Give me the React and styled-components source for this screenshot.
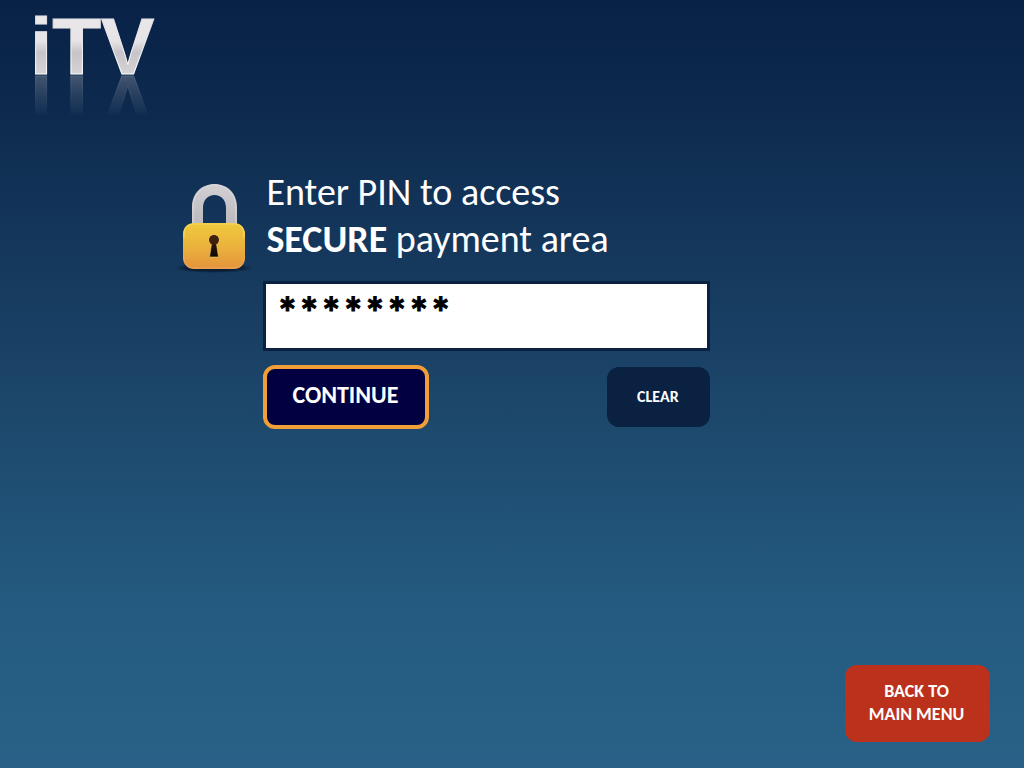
import React, { useState } from 'react';
import styled, { createGlobalStyle } from 'styled-components';

const GlobalStyle = createGlobalStyle`
  * {
    box-sizing: border-box;
  }
  body {
    margin: 0;
    font-family: Carlito, Lato, 'Open Sans', sans-serif;
    color: #fff;
  }
`

const Page = styled.div`
  display: flex;
  flex-direction: column;
  min-height: 100vh;
  padding: 16px 34px 26px;
  background: linear-gradient(#092147 0%, #0d2a4e 14%, #1c466a 52%, #245a7f 78%, #286187 100%);
`

const Logo = styled.svg`
  display: block;
  width: 124px;
  height: 59px;
  overflow: visible;
  -webkit-box-reflect: below 0 linear-gradient(transparent 30%, rgba(0, 0, 0, 0.28));
`

const PinForm = styled.form`
  display: grid;
  grid-template-columns: 76px minmax(0, 447px);
  column-gap: 10px;
  margin-top: 94px;
  margin-left: 15%;
`

const Lock = styled.svg`
  width: 76px;
  height: 98px;
  margin-top: 7px;
`

const Title = styled.label`
  display: block;
  padding-left: 3px;
  font-size: 38px;
  line-height: 47px;
`

const PinInput = styled.input`
  display: block;
  width: 100%;
  height: 70px;
  margin-top: 18px;
  padding: 0 10px 6px;
  border: 3px solid #0a2142;
  border-radius: 0;
  outline: none;
  background: #fff;
  color: #000;
  font-family: inherit;
  font-size: 44px;
  font-weight: bold;
  -webkit-text-stroke: 1px #000;
`

const Actions = styled.div`
  display: flex;
  align-items: center;
  justify-content: space-between;
  margin-top: 14px;
`

const Button = styled.button`
  padding: 0 2px 2px 0;
  border: none;
  border-radius: 12px;
  color: #fff;
  font-family: inherit;
  font-weight: bold;
  cursor: pointer;
`

const ContinueButton = styled(Button)`
  width: 166px;
  height: 64px;
  padding-bottom: 6px;
  border: 4px solid #f19d38;
  background: #010142;
  font-size: 24px;
`

const ClearButton = styled(Button)`
  width: 103px;
  height: 60px;
  background: #0a2142;
  font-size: 16px;
`

const MenuButton = styled(Button)`
  align-self: flex-end;
  width: 145px;
  height: 77px;
  margin-top: auto;
  background: #bb311c;
  font-size: 18px;
  line-height: 23px;
`

function LogoMark() {
  return (
    <Logo viewBox="0 0 124 59" role="img" aria-label="iTV">
      <defs>
        <linearGradient id="metal" x1="0" y1="0" x2="0" y2="59" gradientUnits="userSpaceOnUse">
          <stop offset="0" stopColor="#e9e7ea" />
          <stop offset="0.42" stopColor="#e6e4e6" />
          <stop offset="0.62" stopColor="#c6c4c8" />
          <stop offset="1" stopColor="#d6d4d6" />
        </linearGradient>
        <linearGradient id="rim" x1="0" y1="0" x2="0" y2="59" gradientUnits="userSpaceOnUse">
          <stop offset="0" stopColor="#dddbe0" />
          <stop offset="1" stopColor="#ffffff" />
        </linearGradient>
      </defs>
      <text
        x="-4"
        y="58"
        fontFamily="Liberation Sans, Arial, sans-serif"
        fontWeight="bold"
        fontSize="80"
        fill="url(#metal)"
        stroke="url(#rim)"
        strokeWidth="1"
      >
        iTV
      </text>
    </Logo>
  )
}

function LockIcon() {
  return (
    <Lock viewBox="1 0 76 98" aria-hidden="true">
      <defs>
        <linearGradient id="shackle" x1="0" y1="0" x2="0" y2="1">
          <stop offset="0" stopColor="#d2d0d3" />
          <stop offset="1" stopColor="#b9b7bb" />
        </linearGradient>
        <linearGradient id="body" x1="0" y1="0" x2="0" y2="1">
          <stop offset="0" stopColor="#f0c93c" />
          <stop offset="0.5" stopColor="#ebb33d" />
          <stop offset="1" stopColor="#e3933c" />
        </linearGradient>
        <linearGradient id="keyhole" x1="0" y1="0" x2="0" y2="1">
          <stop offset="0" stopColor="#40200f" />
          <stop offset="1" stopColor="#0d0805" />
        </linearGradient>
        <radialGradient id="shade">
          <stop offset="0" stopColor="#051327" stopOpacity="0.9" />
          <stop offset="0.7" stopColor="#051327" stopOpacity="0.6" />
          <stop offset="1" stopColor="#051327" stopOpacity="0" />
        </radialGradient>
      </defs>
      <ellipse cx="38" cy="92" rx="40" ry="5" fill="url(#shade)" />
      <path
        d="M16 52V31C16 17 26 8 38.500 8S61 17 61 31V52H50V32C50 24 45 19 38.500 19S27 24 27 32V52Z"
        fill="url(#shackle)"
      />
      <path d="M17 50V31C17 18 27 9 38.500 9S60 18 60 31V50" fill="none" stroke="#dcdadd" strokeWidth="1" />
      <rect x="7" y="47" width="62" height="46" rx="11" fill="url(#body)" />
      <path d="M8 62V58Q8 48 18 48H58Q68 48 68 58V62" fill="none" stroke="#f5d75c" strokeWidth="1.2" />
      <path d="M8 80V82Q8 92 18 92H58Q68 92 68 82V80" fill="none" stroke="#efa75a" strokeWidth="1" />
      <path
        d="M35.500 68A5 5 0 1 1 40.500 68L42.500 81H33.500Z"
        fill="url(#keyhole)"
        stroke="#f4cd63"
        strokeWidth="0.6"
      />
      <circle cx="38" cy="64" r="4.800" fill="#40200f" />
    </Lock>
  )
}

function App() {
  const [pin, setPin] = useState('********');

  return (
    <Page>
      <GlobalStyle />
      <header>
        <LogoMark />
      </header>
      <PinForm onSubmit={(e) => e.preventDefault()}>
        <LockIcon />
        <div>
          <Title htmlFor="pin">
            Enter PIN to access
            <br />
            <strong>SECURE</strong> payment area
          </Title>
          <PinInput
            id="pin"
            autoComplete="off"
            value={pin}
            onChange={(e) => setPin(e.target.value.replace(/./g, '*'))}
          />
          <Actions>
            <ContinueButton type="submit">CONTINUE</ContinueButton>
            <ClearButton type="button" onClick={() => setPin('')}>CLEAR</ClearButton>
          </Actions>
        </div>
      </PinForm>
      <MenuButton type="button">
        BACK TO
        <br />
        MAIN MENU
      </MenuButton>
    </Page>
  );
}

export default App;
